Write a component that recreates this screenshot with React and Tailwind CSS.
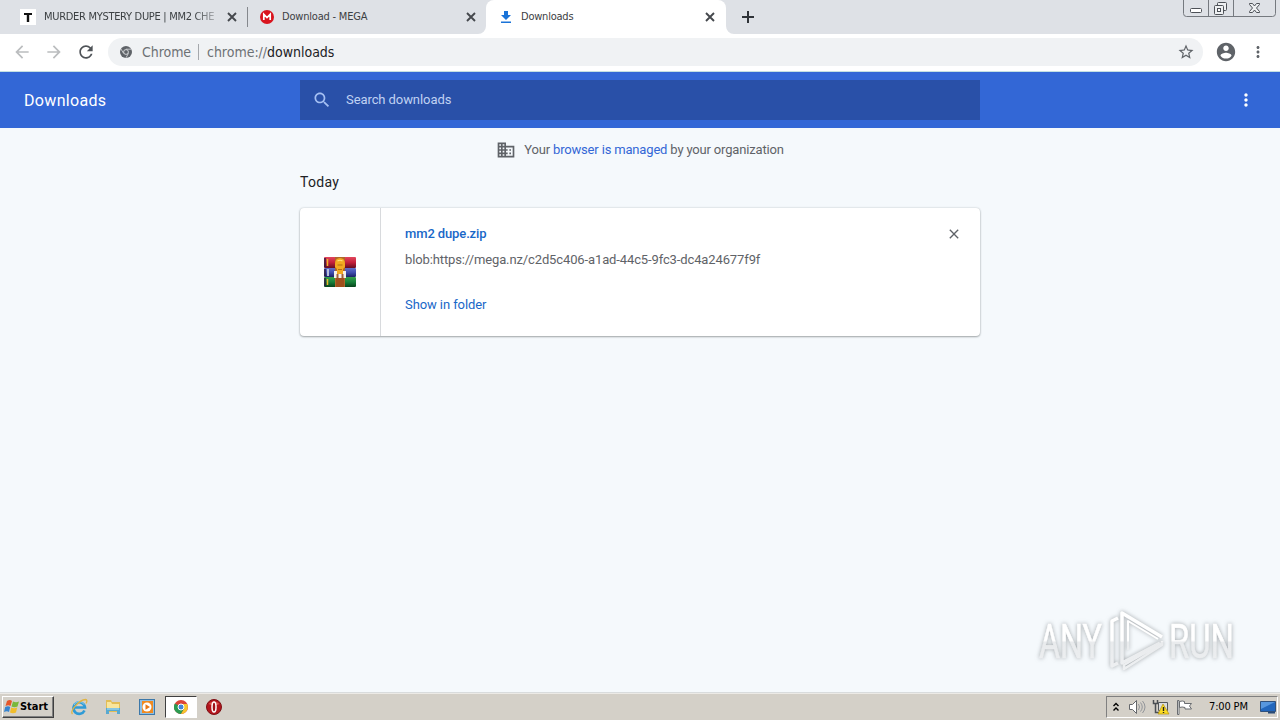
const MATERIAL = {
  back: 'M20 11H7.83l5.59-5.59L12 4l-8 8 8 8 1.41-1.41L7.83 13H20v-2z',
  forward: 'M12 4l-1.41 1.41L16.17 11H4v2h12.17l-5.58 5.59L12 20l8-8z',
  reload: 'M17.65 6.35C16.2 4.9 14.21 4 12 4c-4.42 0-7.99 3.58-7.99 8s3.57 8 7.99 8c3.73 0 6.84-2.55 7.73-6h-2.08c-.82 2.33-3.04 4-5.65 4-3.31 0-6-2.69-6-6s2.69-6 6-6c1.66 0 3.14.69 4.22 1.78L13 11h7V4l-2.35 2.35z',
  star: 'M22 9.24l-7.19-.62L12 2 9.19 8.63 2 9.24l5.46 4.73L5.82 21 12 17.27 18.18 21l-1.63-7.03L22 9.24zM12 15.4l-3.76 2.27 1-4.28-3.32-2.88 4.38-.38L12 6.1l1.71 4.04 4.38.38-3.32 2.88 1 4.28L12 15.4z',
  account: 'M12 2C6.48 2 2 6.48 2 12s4.48 10 10 10 10-4.48 10-10S17.52 2 12 2zm0 3c1.66 0 3 1.34 3 3s-1.34 3-3 3-3-1.34-3-3 1.34-3 3-3zm0 14.2c-2.5 0-4.71-1.28-6-3.22.03-1.99 4-3.08 6-3.08 1.99 0 5.97 1.09 6 3.08-1.29 1.94-3.5 3.22-6 3.22z',
  more: 'M12 8c1.1 0 2-.9 2-2s-.9-2-2-2-2 .9-2 2 .9 2 2 2zm0 2c-1.1 0-2 .9-2 2s.9 2 2 2 2-.9 2-2-.9-2-2-2zm0 6c-1.1 0-2 .9-2 2s.9 2 2 2 2-.9 2-2-.9-2-2-2z',
  search: 'M15.5 14h-.79l-.28-.27C15.41 12.59 16 11.11 16 9.5 16 5.91 13.09 3 9.5 3S3 5.91 3 9.5 5.91 16 9.5 16c1.61 0 3.09-.59 4.23-1.57l.27.28v.79l5 4.99L20.49 19l-4.99-5zm-6 0C7.01 14 5 11.99 5 9.5S7.01 5 9.5 5 14 7.01 14 9.5 11.99 14 9.5 14z',
  business: 'M12 7V3H2v18h20V7H12zM6 19H4v-2h2v2zm0-4H4v-2h2v2zm0-4H4V9h2v2zm0-4H4V5h2v2zm4 12H8v-2h2v2zm0-4H8v-2h2v2zm0-4H8V9h2v2zm0-4H8V5h2v2zm10 12h-8v-2h2v-2h-2v-2h2v-2h-2V9h8v10zm-2-8h-2v2h2v-2zm0 4h-2v2h2v-2z',
  close: 'M19 6.41L17.59 5 12 10.59 6.41 5 5 6.41 10.59 12 5 17.59 6.41 19 12 13.41 17.59 19 19 17.59 13.41 12z',
};

function Icon({ name, className }) {
  return (
    <svg viewBox="0 0 24 24" fill="currentColor" className={`shrink-0 ${className}`}>
      <path d={MATERIAL[name]} />
    </svg>
  );
}

function TabClose() {
  return (
    <svg viewBox="0 0 10 10" className="size-[10px] shrink-0" fill="none" stroke="#45484d" strokeWidth="1.9">
      <path d="M1 1l8 8M9 1L1 9" />
    </svg>
  );
}

function TabStrip() {
  return (
    <div className="flex h-[34px] shrink-0 bg-[#dee1e6] font-['DejaVu_Sans_Condensed','DejaVu_Sans',sans-serif] text-[11px] text-[#3c4043]">
      <div className="flex w-[247px] items-center pl-5">
        <div className="flex size-4 shrink-0 items-center justify-center bg-white">
          <svg viewBox="0 0 8 9" className="h-[9px] w-2" fill="#111"><path d="M0 0h8v2H5.2v7H2.8V2H0z" /></svg>
        </div>
        <div className="ml-2 w-[174px] whitespace-nowrap leading-4 tracking-[-0.3px] [mask-image:linear-gradient(to_right,black_150px,transparent_180px)]">
          MURDER MYSTERY DUPE | MM2 CHE
        </div>
        <div className="ml-[9px] flex"><TabClose /></div>
      </div>
      <div className="mt-[7px] h-5 w-px bg-[#85888d]" />
      <div className="flex w-[238px] items-center pl-3">
        <svg viewBox="0 0 14 14" className="size-[14px] shrink-0">
          <circle cx="7" cy="7" r="7" fill="#d9141e" />
          <path d="M3.8 10V4.4L7 7.6l3.2-3.2V10" fill="none" stroke="#fff" strokeWidth="1.7" />
        </svg>
        <div className="ml-2 w-[184px] whitespace-nowrap tracking-[-0.2px]">Download - MEGA</div>
        <TabClose />
      </div>
      <div className="relative flex w-60 items-center rounded-t-lg bg-white pl-[14px]">
        <svg viewBox="0 0 8 8" className="absolute bottom-0 -left-2 size-2" fill="#fff"><path d="M8 0v8H0a8 8 0 0 0 8-8" /></svg>
        <svg viewBox="0 0 8 8" className="absolute -right-2 bottom-0 size-2" fill="#fff"><path d="M0 0v8h8a8 8 0 0 1-8-8" /></svg>
        <svg viewBox="0 0 12 12" className="size-3 shrink-0" fill="#1a73d8">
          <path d="M4 0h4v4h3L6 9 1 4h3zM1 10.4h10V12H1z" />
        </svg>
        <div className="ml-[9px] w-[184px] tracking-[-0.22px]">Downloads</div>
        <TabClose />
      </div>
      <div className="flex grow items-center pl-4">
        <svg viewBox="0 0 12 12" className="size-3" stroke="#2f3338" strokeWidth="2"><path d="M6 0v12M0 6h12" /></svg>
      </div>
      <svg viewBox="0 0 94 17" className="mr-[3px] h-[17px] w-[94px]" fill="none" stroke="#75797f">
        <path d="M.5 0v13.500q0 3 3 3h86q3 0 3-3V0M25.500 0v16.500M50.500 0v16.500" />
        <rect x="7.500" y="8.500" width="11" height="4" rx="1" fill="#fff" stroke="#4d5157" />
        <g stroke="#4d5157">
          <rect x="34.500" y="2.500" width="9" height="8" rx="1" fill="#eef0f2" />
          <rect x="31.500" y="5.500" width="9" height="9" rx="1" fill="#eef0f2" />
          <rect x="34.500" y="8.500" width="3" height="3" fill="#fff" />
          <path d="M66.500 3.500h3l2 2.500 2-2.500h3v1l-3 3.500 3 3.500v1h-3l-2-2.500-2 2.500h-3v-1l3-3.500-3-3.500z" fill="#eef0f2" />
        </g>
      </svg>
    </div>
  );
}

function Toolbar() {
  return (
    <div className="flex h-[38px] shrink-0 items-center border-b border-[#c4e0e2] bg-white pb-px text-[#5f6368]">
      <Icon name="back" className="ml-3 size-5 text-[#bbbdbf]" />
      <Icon name="forward" className="ml-3 size-5 text-[#bbbdbf]" />
      <Icon name="reload" className="ml-3 size-5 text-[#4f5358]" />
      <div className="ml-3 flex h-7 w-[1095px] items-center rounded-full bg-[#f0f2f4] pr-2 pl-3 font-['DejaVu_Sans_Condensed','DejaVu_Sans',sans-serif] text-[14px]">
        <svg viewBox="0 0 12 12" className="size-3 shrink-0">
          <circle cx="6" cy="6" r="6" fill="#5f6368" />
          <path d="M6 3.200h5.300M3.600 7.400L1 3M8.400 7.400L6 11.800" stroke="#eff1f3" strokeWidth=".7" />
          <circle cx="6" cy="6" r="2.400" fill="#5f6368" stroke="#eff1f3" strokeWidth=".8" />
        </svg>
        <span className="ml-[10px] w-[56px] tracking-[-0.05px] text-[#6d7175]">Chrome</span>
        <span className="h-4 w-px bg-[#a5a8ac]" />
        <span className="ml-2 grow tracking-[-0.02px] text-[#6d7175]">chrome://<span className="text-[#202124]">downloads</span></span>
        <Icon name="star" className="size-[18px]" />
      </div>
      <Icon name="account" className="ml-3 size-[22px]" />
      <Icon name="more" className="ml-3 size-[18px]" />
    </div>
  );
}

function ArchiveIcon() {
  return (
    <svg viewBox="0 0 32 30" className="h-[30px] w-8">
      <defs>
        <linearGradient id="red" x1="0" y1="0" x2="0" y2="1"><stop stopColor="#e2475c" /><stop offset=".5" stopColor="#c31f3b" /><stop offset="1" stopColor="#650d20" /></linearGradient>
        <linearGradient id="blue" x1="0" y1="0" x2="0" y2="1"><stop stopColor="#6270cb" /><stop offset=".5" stopColor="#3f4dae" /><stop offset="1" stopColor="#1b2366" /></linearGradient>
        <linearGradient id="green" x1="0" y1="0" x2="0" y2="1"><stop stopColor="#36a04a" /><stop offset=".5" stopColor="#17803a" /><stop offset="1" stopColor="#07421b" /></linearGradient>
      </defs>
      <rect width="32" height="11" rx="1" fill="url(#red)" />
      <rect x="0" y="11" width="32" height="9" rx="1" fill="url(#blue)" />
      <rect y="20" width="32" height="10" rx="1" fill="url(#green)" />
      <path d="M1 1v9M1 12v7M1 21v8" stroke="#301c42" strokeWidth="1.500" />
      <path d="M3.500 2v7M3.500 22v6" stroke="#edb52c" strokeWidth="1.500" />
      <path d="M4 12v7" stroke="#b8bedb" strokeWidth="2" />
      <path d="M11 0h10v30H11z" fill="#b0672a" />
      <path d="M12 21h8v9h-8z" fill="#a04f1c" />
      <path d="M10 14h12v7H10z" fill="#f5f1ea" />
      <path d="M12.500 17h2v4h-2zM17.500 17h2v4h-2z" fill="#a0603a" />
      <path d="M11 7q0-6 5-6t5 6v3l-2 2v5h-6v-5l-2-2z" fill="#f2a922" />
      <path d="M13.500 4q2.500-1.500 5 0" fill="none" stroke="#ffe27b" strokeWidth="1.200" />
      <path d="M13.500 8h5M14 12.500h4" fill="none" stroke="#b26c12" strokeWidth="1" />
    </svg>
  );
}

function DownloadItem() {
  return (
    <div className="mt-4 flex h-32 rounded bg-white text-[13px] leading-5 shadow-[0_1px_2px_rgba(60,64,67,0.4),0_0_2px_rgba(60,64,67,0.25)]">
      <div className="flex w-[81px] items-center justify-center border-r border-[#d8dadd]">
        <ArchiveIcon />
      </div>
      <div className="flex grow flex-col pt-4 pl-6">
        <div className="font-medium tracking-[-0.12px] text-[#1967c8]">mm2 dupe.zip</div>
        <div className="mt-[6px] tracking-[-0.12px] text-[#5f6368]">blob:https://mega.nz/c2d5c406-a1ad-44c5-9fc3-dc4a24677f9f</div>
        <div className="mt-[25px] tracking-[-0.09px] text-[#1967c8]">Show in folder</div>
      </div>
      <Icon name="close" className="mt-[18px] mr-[18px] size-4 text-[#5f6368]" />
    </div>
  );
}

function Watermark() {
  return (
    <svg
      viewBox="0 0 214 70"
      className="absolute right-[32px] bottom-[17px] h-[70px] w-[214px] font-[Roboto,sans-serif] drop-shadow-[0_0_2px_rgba(80,85,90,0.5)]"
    >
      <defs>
        <linearGradient id="fade" gradientUnits="userSpaceOnUse" x1="0" y1="0" x2="0" y2="70">
          <stop offset=".49" stopColor="#fff" />
          <stop offset=".52" stopColor="#e9ebed" />
          <stop offset="1" stopColor="#eff1f3" />
        </linearGradient>
      </defs>
      <g fill="url(#fade)" stroke="url(#fade)" strokeWidth=".6" fontSize="48">
        <text x="5" y="52" textLength="63" lengthAdjust="spacingAndGlyphs">ANY</text>
        <text x="135" y="52" textLength="65" lengthAdjust="spacingAndGlyphs">RUN</text>
      </g>
      <g fill="none" stroke="url(#fade)" strokeWidth="3.500" strokeLinejoin="round">
        <path d="M84 12l-6 3v45l6-3" />
        <path d="M128 31L88 7v50l38-20" />
        <path d="M124 33L94 15v29" strokeWidth="2" />
        <path d="M128 35v4L90 63v-4l38-22" strokeWidth="2.500" />
      </g>
    </svg>
  );
}

function Taskbar() {
  return (
    <div className="flex h-[27px] shrink-0 items-center border-t border-[#eceae6] bg-[#d4d0c8] font-['DejaVu_Sans_Condensed','DejaVu_Sans',sans-serif] text-[11px] text-black shadow-[0_-1px_0_#d9dcdd]">
      <div className="ml-[2px] flex h-[22px] w-[52px] items-center border border-t-white border-r-[#404040] border-b-[#404040] border-l-white pl-px shadow-[inset_-1px_-1px_0_#808080]">
        <svg viewBox="0 0 16 16" className="size-4 shrink-0">
          <path d="M3 2q3-2 5 0L6.500 7q-2-1.500-5 0z" fill="#e5572a" />
          <path d="M9 2.500q3 1.500 6 0L13.500 7.500q-3 1.500-6 0z" fill="#79b83c" />
          <path d="M1.200 8q3-1.500 5 0L5 13q-2-1.500-5 0z" fill="#3684cf" />
          <path d="M7.200 8.500q3 1.500 6 0L12 13.500q-3 1.500-6 0z" fill="#f1bd2b" />
        </svg>
        <span className="font-bold tracking-[-0.05px]">Start</span>
      </div>
      <svg viewBox="0 0 18 18" className="ml-4 size-[18px]">
        <path d="M14.500 12.500A5.800 5.800 0 1 1 15 9.500H4" fill="none" stroke="#2f9bd6" strokeWidth="2.600" />
        <path d="M14 6.500A5.500 5.500 0 0 0 4 7" fill="none" stroke="#8dd0ef" strokeWidth="1" />
        <path d="M2.500 16C-.5 13 9 2 15.500 1.500q2.500.5.500 4" fill="none" stroke="#e0b443" strokeWidth="1.300" />
      </svg>
      <svg viewBox="0 0 18 18" className="ml-4 size-[18px]">
        <path d="M2 2h5l1 2h8v10H2z" fill="#e2bd56" />
        <path d="M3 4h4l1 2h7v5H3z" fill="#f8e59c" />
        <path d="M2 10h14v6h-3v-3H5v3H2z" fill="#58a9d1" />
        <path d="M3 11h12" stroke="#b4e3f3" />
      </svg>
      <svg viewBox="0 0 18 18" className="ml-4 size-[18px]">
        <rect x="1.500" y="1.500" width="15" height="15" fill="#8fbfe3" stroke="#3c78a9" />
        <rect x="4" y="3" width="11" height="12" fill="#f08a20" />
        <circle cx="9" cy="9" r="4.500" fill="#fff" />
        <path d="M7.500 6.200v5.600L12 9z" fill="#e87817" />
      </svg>
      <div className="ml-[9px] flex h-[22px] w-8 items-center justify-center border border-t-[#404040] border-r-white border-b-white border-l-[#404040] bg-white">
        <svg viewBox="0 0 14 14" className="size-[14px]">
          <circle cx="7" cy="7" r="7" fill="#dc4437" />
          <path d="M.9 3.500A7 7 0 0 0 7 14l3-5.200L7 7z" fill="#2b9b51" />
          <path d="M13.100 4A7 7 0 0 1 7 14l3.100-5.200L8 4z" fill="#f6c72d" />
          <circle cx="7" cy="7" r="3" fill="#4285d8" stroke="#fff" />
        </svg>
      </div>
      <svg viewBox="0 0 16 16" className="ml-[9px] size-4">
        <circle cx="8" cy="8" r="7.500" fill="#b3161d" stroke="#7d1015" />
        <path d="M2.500 5a7 6 0 0 1 11 0L8 7z" fill="#dd5552" />
        <ellipse cx="8" cy="8" rx="2" ry="5" fill="#a01118" stroke="#fff" strokeWidth="1.500" />
      </svg>
      <div className="mr-0.5 ml-auto flex h-[22px] w-[172px] items-center border border-t-[#808080] border-r-white border-b-white border-l-[#808080] pl-[5px]">
        <svg viewBox="0 0 8 10" className="h-[10px] w-2 shrink-0" fill="none" stroke="#000" strokeWidth="1.400"><path d="M1.500 4L4 1.500 6.500 4M1.500 8.500L4 6l2.500 2.500" /></svg>
        <svg viewBox="0 0 18 16" className="ml-2 h-4 w-[18px] shrink-0" stroke="#64676b">
          <path d="M1.500 5.500h3l4-4v13l-4-4h-3z" fill="#fff" />
          <path d="M10.500 5q2 3 0 6M12.500 3.500q3.500 4.500 0 9M14.500 2q5 6 0 12" fill="none" stroke="#92959a" />
        </svg>
        <svg viewBox="0 0 18 16" className="ml-[6px] h-4 w-[18px] shrink-0">
          <path d="M6.500 3.500h9v8h-9z" fill="#dadcde" stroke="#53575c" />
          <path d="M1.500 1v3.500h4V1M3.500 4.500v9h4" fill="none" stroke="#4b4f54" strokeWidth="1.500" />
          <path d="M11 5l6 10H6z" fill="#fbdc24" stroke="#b49008" strokeWidth=".7" />
          <path d="M11.500 8v4M11.500 13v1" stroke="#222" strokeWidth="1.400" />
        </svg>
        <svg viewBox="0 0 18 16" className="ml-[6px] h-4 w-[18px] shrink-0" fill="#fff" stroke="#696c70">
          <path d="M1.500 1.500h1.500v14H1.500zM3.500 2.500q3-1 5 0v2h7l-2 2.500 2 3H9v-1.500q-3-1-5.500 0z" />
        </svg>
        <span className="ml-[15px] w-[51px] shrink-0 whitespace-nowrap tracking-[-0.15px]">7:00 PM</span>
        <svg viewBox="0 0 16 14" className="h-[14px] w-4 shrink-0">
          <path d="M.5 1.500h15v10H.5z" fill="#2267bd" stroke="#30517c" />
          <path d="M1 2h14L1 9z" fill="#5797de" />
          <path d="M8 12h7v1.500H8z" fill="#294a76" />
        </svg>
      </div>
    </div>
  );
}

export default function App() {
  return (
    <div className="flex h-screen flex-col overflow-hidden bg-[#f5f9fc] font-[Roboto,sans-serif]">
      <TabStrip />
      <Toolbar />
      <header className="flex h-14 shrink-0 items-center bg-[#3367d6] text-white">
        <h1 className="w-[300px] pt-px pl-6 text-base tracking-[0.33px]">Downloads</h1>
        <div className="flex h-10 w-[680px] items-center bg-[#2950a8] pl-3 text-[13px] text-[#c0d2f3]">
          <Icon name="search" className="size-5 text-[#a5c0f3]" />
          <span className="ml-[14px] tracking-[-0.08px]">Search downloads</span>
        </div>
        <Icon name="more" className="mr-6 ml-auto size-5" />
      </header>
      <main className="relative grow">
        <div className="mx-auto flex w-[680px] flex-col">
          <div className="flex h-11 items-center justify-center text-[13px] tracking-[-0.17px] text-[#5f6368]">
            <Icon name="business" className="mr-2 size-5" />
            <span>Your <a className="text-[#3367d6]">browser is managed</a> by your organization</span>
          </div>
          <h2 className="text-sm leading-5 tracking-[0.3px] text-[#202124]">Today</h2>
          <DownloadItem />
        </div>
        <Watermark />
      </main>
      <Taskbar />
    </div>
  );
}
